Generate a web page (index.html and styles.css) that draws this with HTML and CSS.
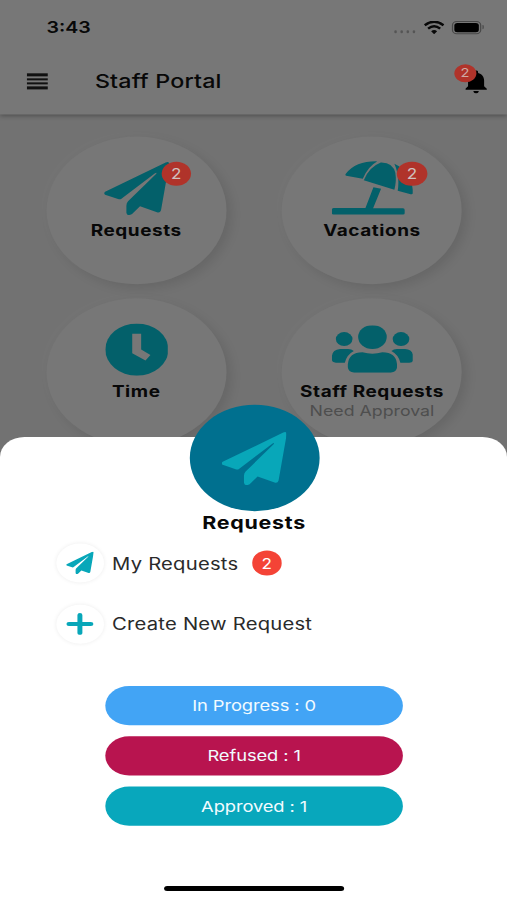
FILE: index.html
```
<!DOCTYPE html>
<html lang="en">
<head>
  <meta charset="UTF-8" />
  <meta name="viewport" content="width=device-width, initial-scale=1.0" />
  <title>Staff Portal</title>
  <link rel="stylesheet" href="styles.css">
</head>
<body>
  <svg width="0" height="0" class="defs">
    <symbol id="plane" viewBox="154 109 195 160" preserveAspectRatio="none">
      <path d="M157 199L339 111Q351 106 349 119L325 255Q322 264 313 261L262 243L238 266Q223 274 221 262V241Q221 233 226 228L310 146Q314 140 307 144L205 221Q201 223 196 221L157 208Q151 204 157 199z"/>
    </symbol>
  </svg>

  <div class="phone">
    <header class="header">
      <div class="status">
        <span class="time">3:43</span>
        <div class="status-icons">
          <span class="dots"><i></i><i></i><i></i><i></i></span>
          <svg class="wifi" viewBox="0 0 62 40" preserveAspectRatio="none">
            <path d="M3 13Q31-9 59 13M13 23Q31 8 49 23" fill="none" stroke="#080808" stroke-width="7.500"/>
            <path d="M22 31Q31 24 40 31L31 40z" fill="#080808"/>
          </svg>
          <span class="battery"></span>
        </div>
      </div>
      <div class="appbar">
        <div class="menu"><i></i><i></i><i></i><i></i></div>
        <h1>Staff Portal</h1>
        <div class="bell">
          <svg viewBox="4 2.5 16 19.5" preserveAspectRatio="none"><path d="M12 22c1.1 0 2-.9 2-2h-4c0 1.100.9 2 2 2zm6-6v-5c0-3.070-1.640-5.640-4.500-6.320V4c0-.83-.67-1.500-1.500-1.500s-1.500.67-1.500 1.500v.68C7.630 5.360 6 7.920 6 11v5l-2 2v1h16v-1l-2-2z"/></svg>
          <span class="badge badge-bell">2</span>
        </div>
      </div>
    </header>

    <main class="grid">
      <div class="card">
        <div class="icon"><svg class="i-plane"><use href="#plane"/></svg></div>
        <b>Requests</b>
        <span class="badge badge-card">2</span>
      </div>
      <div class="card">
        <div class="icon">
          <svg class="i-beach" viewBox="198 123 245 162" preserveAspectRatio="none">
            <path d="M240 162Q270 124 334 125Q306 140 291 177L241 168Q236 166 240 162z"/>
            <path d="M294 181Q309 142 345 128Q382 127 389 160Q393 184 386 210z"/>
            <path d="M386 132Q438 156 443 218Q442 225 435 223L396 213Q403 170 386 132z"/>
            <path d="M323 202L346 207L322 265H412Q417 265 417 270V280Q417 284 412 284H203Q198 284 198 280V269Q198 264 203 264H299z"/>
          </svg>
        </div>
        <b>Vacations</b>
        <span class="badge badge-card">2</span>
      </div>
      <div class="card">
        <div class="icon">
          <svg class="i-clock" viewBox="223 116 190 156" preserveAspectRatio="none">
            <ellipse cx="318" cy="194" rx="95" ry="78"/>
            <path class="hands" d="M304 147H331V194L359 210L344 227L304 205z"/>
          </svg>
        </div>
        <b>Time</b>
      </div>
      <div class="card">
        <div class="icon">
          <svg class="i-users" viewBox="198 123 245 142" preserveAspectRatio="none">
            <ellipse cx="235" cy="164" rx="25" ry="21"/>
            <ellipse cx="406" cy="164" rx="25" ry="21"/>
            <ellipse cx="320" cy="158" rx="43" ry="36"/>
            <path d="M223 194H247Q257 194 264 200Q243 211 237 235H210Q198 235 198 225V215Q200 196 223 194z"/>
            <path d="M418 194H394Q384 194 377 200Q398 211 404 235H431Q443 235 443 225V215Q441 196 418 194z"/>
            <path d="M290 204Q320 213 350 204Q391 204 394 240V249Q393 264 375 265H265Q247 264 246 249V240Q249 204 290 204z"/>
          </svg>
        </div>
        <b>Staff Requests</b>
        <small>Need Approval</small>
      </div>
    </main>

    <section class="sheet">
      <div class="avatar"><svg class="i-plane"><use href="#plane"/></svg></div>
      <h2>Requests</h2>
      <ul class="actions">
        <li>
          <span class="round"><svg class="i-small"><use href="#plane"/></svg></span>
          <span>My Requests</span>
          <span class="badge">2</span>
        </li>
        <li>
          <span class="round"><svg class="i-plus" viewBox="0 0 20 20"><path d="M10 2v16M2 10h16" stroke="#08a7b9" stroke-width="3.600" stroke-linecap="round"/></svg></span>
          <span>Create New Request</span>
        </li>
      </ul>
      <div class="stats">
        <div class="pill progress">In Progress : 0</div>
        <div class="pill refused">Refused : 1</div>
        <div class="pill approved">Approved : 1</div>
      </div>
      <div class="home"></div>
    </section>
  </div>
</body>
</html>
```
FILE: styles.css
```
* { box-sizing: border-box; }
body { margin: 0; overflow: hidden; font-family: Inter, "Liberation Sans", sans-serif; }
.defs { position: absolute; }
svg { display: block; }

/* 414x896 layout stretched over the window */
.phone {
  position: relative; width: 414px; height: 896px; overflow: hidden;
  background: #727272; color: #080808;
  transform: scale(1.22464, 1.00446); transform-origin: 0 0;
}

.header { position: relative; height: 114px; background: #777; box-shadow: 0 1px 4px rgba(0,0,0,.3); }
.status { display: flex; justify-content: space-between; height: 54px; padding: 17px 18.5px 0 38px; }
.time { font-size: 16px; font-weight: 600; line-height: 20px; }
.status-icons { display: flex; height: 20px; align-items: center; }
.dots { display: flex; gap: 2.5px; margin: 8px 6.5px 0 0; }
.dots i { width: 2.5px; height: 3px; border-radius: 50%; background: #555; }
.wifi { width: 17px; height: 13px; margin-right: 6px; }
.battery {
  position: relative; width: 24px; height: 13px; margin-right: 3px;
  border: 1px solid #484848; border-radius: 4px; padding: 1px;
}
.battery::before { content: ""; display: block; height: 100%; border-radius: 2.5px; background: #000; }
.battery::after { content: ""; position: absolute; right: -3.5px; top: 3.5px; width: 1.5px; height: 4px; border-radius: 0 2px 2px 0; background: #484848; }

.appbar { display: flex; align-items: center; height: 54px; padding: 0 16.5px 0 21.5px; }
.menu { display: flex; flex-direction: column; gap: 2.2px; width: 17.5px; margin-right: 38.5px; }
.menu i { height: 2.2px; background: #111; }
h1 { margin: 0; flex: 1; font-size: 19px; font-weight: 500; letter-spacing: .15px; }
.bell { position: relative; }
.bell svg { width: 17.5px; height: 23px; fill: #000; }

.badge {
  display: flex; align-items: center; justify-content: center;
  width: 24.5px; height: 24.5px; border-radius: 50%;
  background: #f44336; color: #fff; font-size: 14px;
}
.badge-card { position: absolute; left: 94px; top: 24.5px; background: #b0332a; color: #cfc0be; }
.badge-bell { position: absolute; left: -9.5px; top: -6px; width: 18.5px; height: 18.5px; font-size: 12px; background: #b0332a; color: #cfaaa4; }

.grid {
  display: grid; grid-template-columns: 192.5px 192.5px; justify-content: center;
  justify-items: center; row-gap: 13.5px; padding: 22px 0 0 1px;
}
.card {
  position: relative; display: flex; flex-direction: column; align-items: center;
  width: 147px; height: 147px; padding-top: 24px; border-radius: 50%;
  background: #777; box-shadow: 4px 4px 10px rgba(0,0,0,.1), -3px -3px 10px rgba(255,255,255,.02);
}
.icon { display: flex; align-items: center; height: 54px; margin-bottom: 5.5px; fill: #03606a; }
.card b { font-size: 15.5px; line-height: 20px; letter-spacing: .45px; white-space: nowrap; }
.card small { font-size: 14.5px; line-height: 17px; color: #4e4e4e; white-space: nowrap; }
.i-plane { width: 53px; height: 53px; }
.i-beach { width: 66.5px; height: 54px; }
.i-clock { width: 51.5px; height: 52px; }
.i-users { width: 66.5px; height: 47px; }
.hands { fill: #777; }

.sheet {
  position: absolute; left: 0; right: 0; bottom: 0; height: 461px; padding-left: 1px;
  display: flex; flex-direction: column; align-items: center;
  background: #fff; border-radius: 20px 20px 0 0;
}
.avatar {
  display: flex; align-items: center; justify-content: center;
  flex: none; width: 106px; height: 106px; margin-top: -32px; border-radius: 50%;
  background: #00708f; fill: #08a7b9;
}
h2 { margin: 1px 0 0; font-size: 17.5px; line-height: 22px; font-weight: 700; letter-spacing: .6px; }
.actions { list-style: none; align-self: stretch; margin: 9px 0 0; padding: 0 0 0 45px; }
.actions li { display: flex; align-items: center; height: 39px; margin-bottom: 21.5px; font-size: 16.5px; letter-spacing: .19px; color: #2a2a2a; }
.actions .badge { margin-left: 11px; letter-spacing: 0; }
.round {
  display: flex; align-items: center; justify-content: center;
  width: 38.5px; height: 39px; margin-right: 7px; border-radius: 50%;
  background: #fff; fill: #08a7b9; box-shadow: 0 0 4px rgba(0,0,0,.08);
}
.i-small { width: 22.5px; height: 22.5px; }
.i-plus { width: 22.5px; height: 22.5px; }
.stats { display: flex; flex-direction: column; gap: 11px; margin-top: 20.5px; }
.pill {
  width: 243.5px; height: 39px; border-radius: 20px;
  color: #f2fbff; font-size: 15px; line-height: 39px; text-align: center; letter-spacing: -.1px;
}
.progress { background: #42a4f5; }
.refused { background: #b8144f; }
.approved { background: #08a7bc; }
.home { width: 147px; height: 5.5px; margin-top: 60px; border-radius: 3px; background: #000; }
```
